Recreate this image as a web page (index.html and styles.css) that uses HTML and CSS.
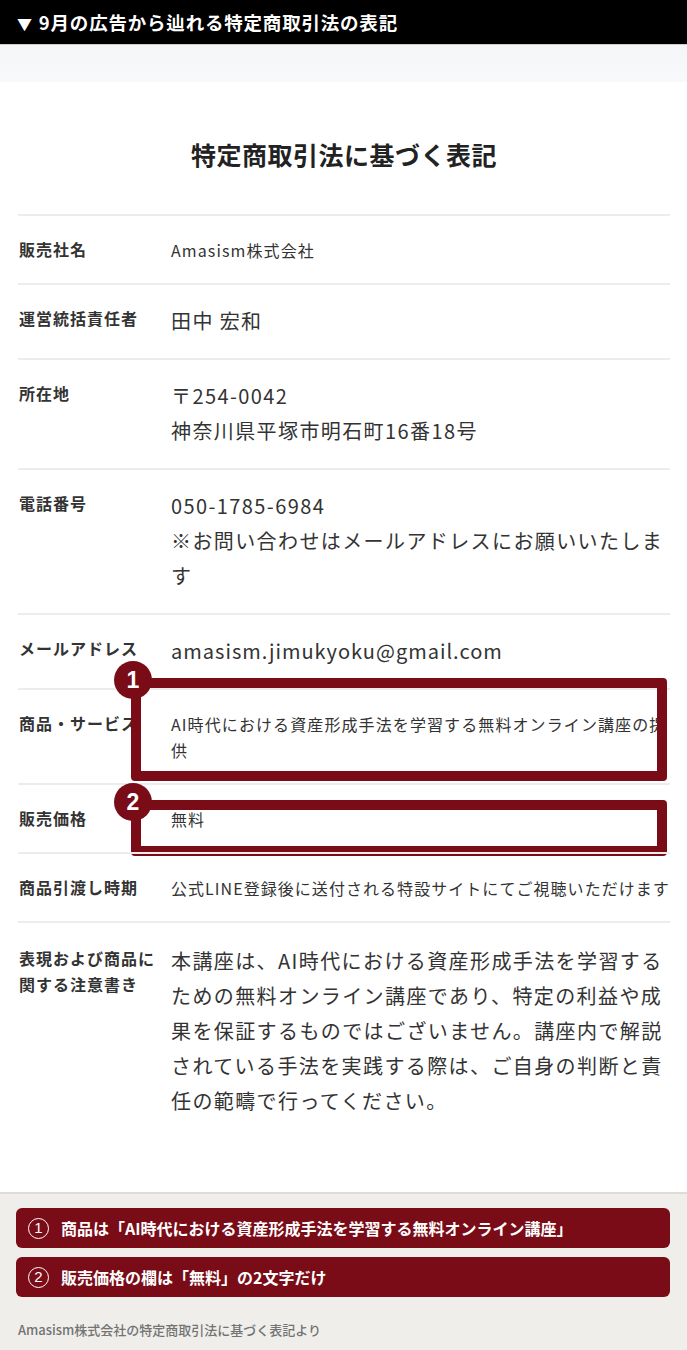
FILE: index.html
```html
<!DOCTYPE html>
<html lang="ja">
<head>
<meta charset="utf-8">
<link rel="stylesheet" href="styles.css">
</head>
<body>
<header class="topbar"><span class="tri">▼</span> 9月の広告から辿れる特定商取引法の表記</header>
<div class="strip"></div>
<main class="doc">
  <h1 class="title">特定商取引法に基づく表記</h1>
  <div class="table">
    <div class="row">
      <div class="label">販売社名</div>
      <div class="value small">Amasism株式会社</div>
    </div>
    <div class="row">
      <div class="label">運営統括責任者</div>
      <div class="value">田中 宏和</div>
    </div>
    <div class="row">
      <div class="label">所在地</div>
      <div class="value">〒254-0042<br>神奈川県平塚市明石町16番18号</div>
    </div>
    <div class="row">
      <div class="label">電話番号</div>
      <div class="value">050-1785-6984<br>※お問い合わせはメールアドレスにお願いいたします</div>
    </div>
    <div class="row">
      <div class="label">メールアドレス</div>
      <div class="value email">amasism.jimukyoku@gmail.com</div>
    </div>
    <div class="row">
      <div class="label">商品・サービス</div>
      <div class="value small">AI時代における資産形成手法を学習する無料オンライン講座の提供</div>
      <div class="mark mark-1"><span class="badge">1</span></div>
    </div>
    <div class="row">
      <div class="label">販売価格</div>
      <div class="value small">無料</div>
      <div class="mark mark-2"><span class="badge">2</span></div>
    </div>
    <div class="row">
      <div class="label">商品引渡し時期</div>
      <div class="value small nowrap">公式LINE登録後に送付される特設サイトにてご視聴いただけます</div>
    </div>
    <div class="row last">
      <div class="label">表現および商品に関する注意書き</div>
      <div class="value">本講座は、AI時代における資産形成手法を学習するための無料オンライン講座であり、特定の利益や成果を保証するものではございません。講座内で解説されている手法を実践する際は、ご自身の判断と責任の範疇で行ってください。</div>
    </div>
  </div>
</main>
<section class="notes">
  <div class="note"><span class="num">1</span>商品は「AI時代における資産形成手法を学習する無料オンライン講座」</div>
  <div class="note"><span class="num">2</span>販売価格の欄は「無料」の2文字だけ</div>
  <p class="source">Amasism株式会社の特定商取引法に基づく表記より</p>
</section>
</body>
</html>
```

FILE: styles.css
```css
* { box-sizing: border-box; }
html, body { margin: 0; padding: 0; }
body {
  width: 687px;
  min-height: 1350px;
  display: flex;
  flex-direction: column;
  font-family: "Noto Sans CJK JP", "Noto Sans", sans-serif;
  color: #333;
  background: #fff;
}
.topbar {
  height: 45px;
  background: #000;
  color: #fff;
  font-weight: 700;
  font-size: 18.5px;
  line-height: 44px;
  padding-left: 17px;
  border-bottom: 1px solid #cfcfcf;
  letter-spacing: 0.8px;
}
.tri { font-size: 15px; margin-right: 1px; }
.strip {
  height: 37px;
  background: linear-gradient(#f5f6f7, #f8f9fa);
}
.doc {
  padding: 54px 17px 54px 18px;
}
.title {
  margin: 0 0 42px;
  text-align: center;
  font-size: 25px;
  line-height: 36px;
  font-weight: 700;
  color: #222;
  letter-spacing: 0.5px;
}
.table { display: flex; flex-direction: column; }
.row {
  position: relative;
  display: grid;
  grid-template-columns: 153px 1fr;
  border-top: 2px solid #ececec;
  padding: 20px 0 20px;
}
.row.last { padding-top: 22px; }
.label {
  font-weight: 700;
  font-size: 16px;
  line-height: 26px;
  letter-spacing: 1px;
  padding-left: 1px;
  padding-right: 12px;
  color: #333;
}
.value {
  font-size: 20px;
  line-height: 35px;
  letter-spacing: 1.4px;
  color: #333;
  margin-top: -2px;
}
.value.email { letter-spacing: 1px; }
.value.small {
  font-size: 16px;
  line-height: 26px;
  letter-spacing: 1.1px;
  margin-top: 1px;
}
.value.nowrap { white-space: nowrap; letter-spacing: 1.05px; }
.mark {
  position: absolute;
  left: 113px;
  width: 536px;
  border: 10px solid #7a0c18;
  border-radius: 4px;
}
.mark-1 { top: -12px; height: 103px; }
.mark-2 { top: 15px; height: 56px; }
.badge {
  position: absolute;
  left: -27px;
  top: -27px;
  width: 38px;
  height: 38px;
  border-radius: 50%;
  background: #7a0c18;
  color: #fff;
  font-family: "Liberation Sans", "Noto Sans", sans-serif;
  font-weight: 700;
  font-size: 23px;
  line-height: 38px;
  text-align: center;
}
.notes {
  flex: 1;
  background: #efeeea;
  border-top: 2px solid #dddcd6;
  padding: 14px 17px 12px 16px;
  display: flex;
  flex-direction: column;
  gap: 9px;
}
.note {
  height: 40px;
  background: #7a0c18;
  border-radius: 6px;
  color: #fff;
  font-weight: 700;
  font-size: 16px;
  line-height: 40px;
  padding-left: 12px;
  display: flex;
  align-items: center;
}
.num {
  width: 21px;
  height: 21px;
  border: 1.5px solid #fff;
  border-radius: 50%;
  font-size: 15px;
  font-weight: 400;
  line-height: 18px;
  text-align: center;
  margin-right: 12px;
  font-family: "Liberation Sans", sans-serif;
}
.source {
  margin: 14px 0 0 2px;
  font-size: 13px;
  line-height: 20px;
  color: #737373;
  font-weight: 500;
}
```
